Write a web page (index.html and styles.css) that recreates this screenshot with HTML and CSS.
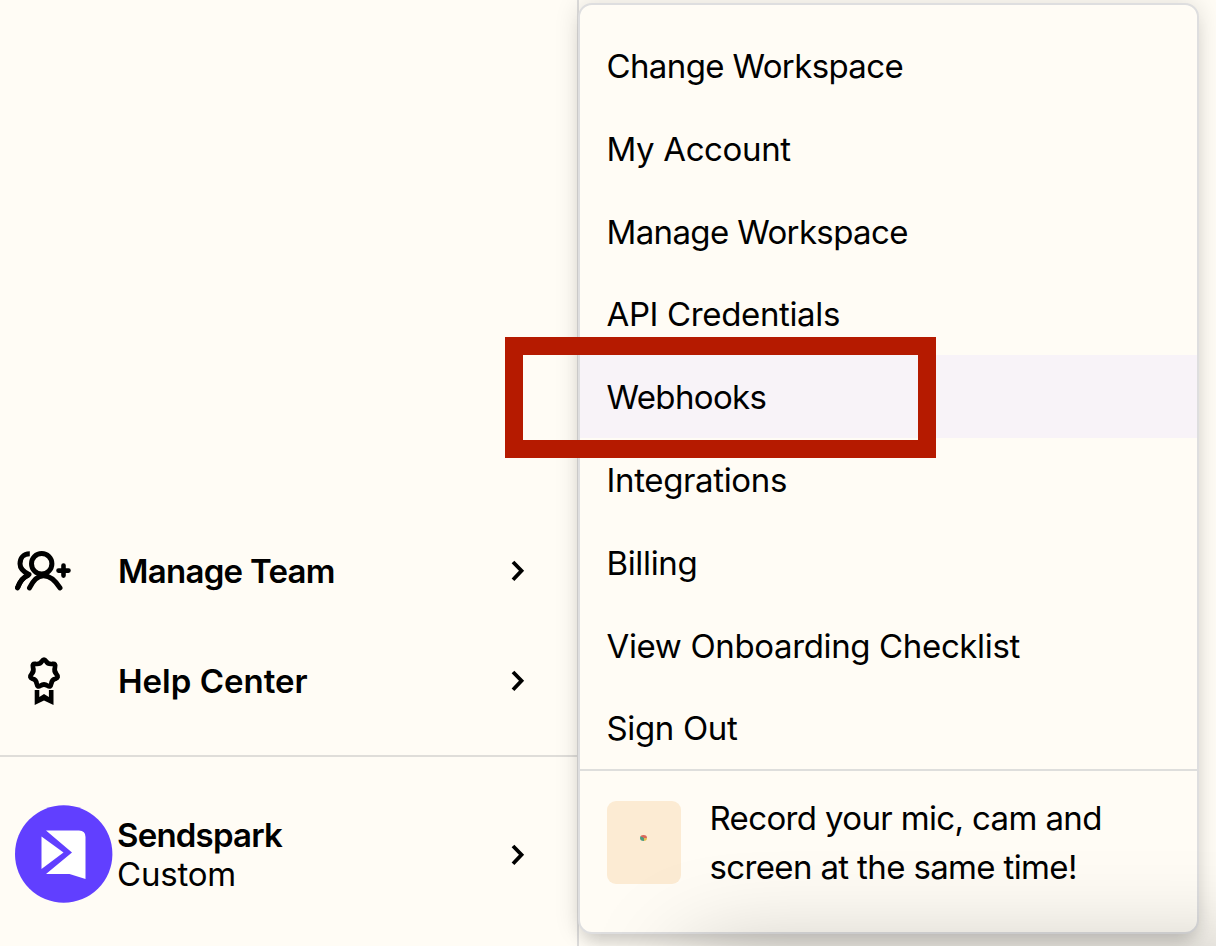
FILE: index.html
```html
<!DOCTYPE html>
<html lang="en">
<head>
  <meta charset="UTF-8" />
  <title>Sendspark</title>
  <link rel="stylesheet" href="styles.css">
</head>
<body>
  <div class="app">
    <aside class="sidebar">
      <nav class="side-nav">
        <a class="side-link">
          <svg class="side-icon" viewBox="0 0 60 44" fill="none" stroke="#000" stroke-width="5">
            <circle cx="26.700" cy="14.700" r="10.200" />
            <path d="M14.500 38.900C18 31.700 22 26.700 28.500 26.700S40.500 31.700 45 38.900" stroke-linecap="round" />
            <path d="M14.800 4.800C8 4.800 5 9.500 5 14.700S8.500 22.800 14 25.500C8.500 27.700 5 32.200 2.500 38.900" stroke-linejoin="round" />
            <path d="M12.500 26.700C8.500 28.200 5 32.200 2.500 38.900" stroke-linecap="round" />
            <path d="M43.500 21.600H53.500M48.500 16.600V26.600" stroke-linecap="round" stroke-width="4.600" />
          </svg>
          <span class="side-label team">Manage Team</span>
          <svg class="chevron" viewBox="0 0 14 22"><path d="M2 2L10.500 10.800L2 19.700" /></svg>
        </a>
        <a class="side-link">
          <svg class="side-icon" viewBox="0 0 60 52">
            <path d="M26.900 6.300Q29 3 31.100 6.300Q33 9.500 37.300 8.900Q41.200 8.200 40 12.300Q38.600 16.200 41.600 19.400Q44.300 22.200 40.500 23.800Q36.700 24.600 36.300 28.700Q35.600 33 32.600 30.700Q29 28.300 25.400 30.700Q22.400 33 21.700 28.700Q21.300 24.600 17.500 23.800Q13.700 22.200 16.400 19.400Q19.400 16.200 18 12.300Q16.800 8.200 20.700 8.900Q25 9.500 26.900 6.300Z" fill="none" stroke="#000" stroke-width="4.700" stroke-linejoin="round" />
            <path d="M19.700 35H24.300V42L29 39L33.900 42V35H38.500V50L29 45.500L19.700 50Z" fill="#000" />
          </svg>
          <span class="side-label">Help Center</span>
          <svg class="chevron" viewBox="0 0 14 22"><path d="M2 2L10.500 10.800L2 19.700" /></svg>
        </a>
      </nav>
      <div class="workspace">
        <svg class="avatar" viewBox="0 0 98 98">
          <circle cx="48.700" cy="49" r="48.700" fill="#613fff" />
          <path d="M26.500 31.500L48.500 47.500L26.500 64Z" fill="#fff" />
          <path d="M31 25.500H64Q70.500 25.500 70.500 32V74L54.500 69H31L57 47.500Z" fill="#fff" />
        </svg>
        <div class="workspace-info">
          <div class="workspace-name">Sendspark</div>
          <div class="workspace-plan">Custom</div>
        </div>
        <svg class="chevron" viewBox="0 0 14 22"><path d="M2 2L10.500 10.800L2 19.700" /></svg>
      </div>
    </aside>

    <main class="content">
      <div class="menu">
        <ul class="menu-list">
          <li class="menu-item tight">Change Workspace</li>
          <li class="menu-item">My Account</li>
          <li class="menu-item tight">Manage Workspace</li>
          <li class="menu-item">API Credentials</li>
          <li class="menu-item tight active">Webhooks</li>
          <li class="menu-item">Integrations</li>
          <li class="menu-item">Billing</li>
          <li class="menu-item">View Onboarding Checklist</li>
          <li class="menu-item">Sign Out</li>
        </ul>
        <div class="promo">
          <div class="promo-icon">
            <span class="promo-dot"></span>
          </div>
          <p class="promo-text">Record your mic, cam and<br>screen at the same time!</p>
        </div>
      </div>
    </main>
    <div class="bottom-shadow"></div>
    <div class="highlight"></div>
  </div>
</body>
</html>
```
FILE: styles.css
```css
* {
  box-sizing: border-box;
}

body {
  margin: 0;
  font-family: Inter, "Liberation Sans", sans-serif;
  font-size: 33px;
  color: #000;
  background: #fffcf5;
}

.app {
  position: relative;
  display: flex;
  width: 1216px;
  height: 946px;
  overflow: hidden;
}

/* Sidebar */
.sidebar {
  display: flex;
  flex-direction: column;
  justify-content: flex-end;
  width: 579px;
  border-right: 2px solid #dedddc;
}

.side-nav {
  padding-bottom: 19px;
}

.side-link {
  display: flex;
  align-items: center;
  height: 110px;
  padding: 0 52px 0 15px;
}

.side-icon {
  width: 60px;
  margin-right: 43px;
}

.side-label {
  flex: 1;
  font-weight: 600;
}

.side-label.team {
  letter-spacing: -0.72px;
}

.chevron {
  width: 14px;
  height: 22px;
  fill: none;
  stroke: #000;
  stroke-width: 3.8;
}

.workspace {
  display: flex;
  align-items: center;
  height: 191px;
  padding: 6px 52px 0 15px;
  border-top: 2px solid #dfddd9;
}

.avatar {
  width: 98px;
  height: 98px;
  margin: -1px 4px 0 0;
}

.workspace-info {
  flex: 1;
  line-height: 39px;
}

.workspace-name {
  font-weight: 600;
  letter-spacing: -0.8px;
}

.workspace-plan {
  letter-spacing: -0.2px;
}

/* Menu */
.content {
  flex: 1;
  padding-top: 2.5px;
}

.menu {
  width: 621px;
  height: 931.5px;
  margin-left: -1px;
  border: 2px solid #dededf;
  border-radius: 14px;
  background: #fffcf5;
  box-shadow: 0 0 24px rgba(0, 0, 0, 0.13), 0 14px 18px -6px rgba(0, 0, 0, 0.14);
}

.menu-list {
  margin: 0;
  padding: 19.5px 0 0;
  list-style: none;
}

.menu-item {
  height: 82.8px;
  padding-left: 26.5px;
  line-height: 85px;
  letter-spacing: -0.36px;
}

.menu-item.tight {
  letter-spacing: -0.63px;
}

.menu-item.active {
  background: #f8f3f8;
}

.promo {
  display: flex;
  height: 163px;
  padding: 30px 0 0 26.5px;
  border-top: 2px solid #dededc;
}

.promo-icon {
  display: flex;
  align-items: center;
  justify-content: center;
  width: 74px;
  height: 83px;
  margin-right: 29px;
  padding-bottom: 9px;
  border-radius: 9px;
  background: #fcebd3;
}

.promo-dot {
  width: 7px;
  height: 6px;
  border-radius: 50%;
  background: conic-gradient(#d9685c 0 25%, #e5bd50 25% 50%, #4d9b80 50% 85%, #d9685c 85%);
}

.promo-text {
  margin: -7px 0 0;
  line-height: 49px;
  letter-spacing: -0.64px;
}

/* Soft shade rising from the bottom edge */
.bottom-shadow {
  position: absolute;
  left: 690px;
  top: 956px;
  width: 600px;
  height: 100px;
  box-shadow: 0 0 100px rgba(0, 0, 0, 0.26);
}

/* Callout around the active item */
.highlight {
  position: absolute;
  left: 505px;
  top: 337px;
  width: 431px;
  height: 121px;
  border: 18px solid #b51a00;
}
```
